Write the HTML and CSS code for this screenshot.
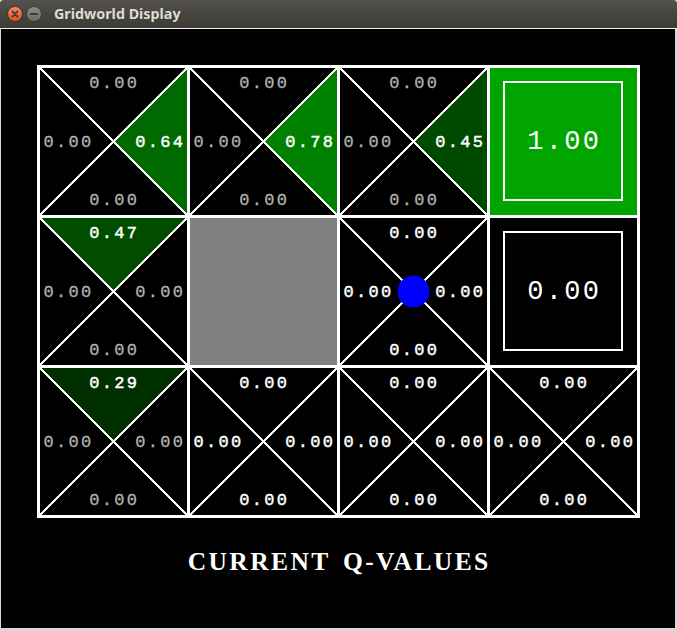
FILE: index.html
```html
<!DOCTYPE html>
<html>
<head>
<meta charset="utf-8">
<title>Gridworld Display</title>
<link rel="stylesheet" href="styles.css">
</head>
<body>
<div class="window">
  <div class="titlebar">
    <span class="btn">
      <svg width="16" height="16" viewBox="0 0 16 16">
        <defs>
          <linearGradient id="gClose" x1="0" y1="0" x2="0" y2="1">
            <stop offset="0" stop-color="#f58c64"/>
            <stop offset="1" stop-color="#df4a1c"/>
          </linearGradient>
          <linearGradient id="gMin" x1="0" y1="0" x2="0" y2="1">
            <stop offset="0" stop-color="#8c8b86"/>
            <stop offset="1" stop-color="#6a6964"/>
          </linearGradient>
        </defs>
        <circle cx="8" cy="8" r="7.5" fill="url(#gClose)" stroke="#3a2a22" stroke-width="0.8"/>
        <path d="M5.4 5.4 L10.6 10.6 M10.6 5.4 L5.4 10.6" stroke="#3c3b37" stroke-width="1.8" stroke-linecap="round"/>
      </svg>
    </span>
    <span class="btn">
      <svg width="16" height="16" viewBox="0 0 16 16">
        <circle cx="8" cy="8" r="7.5" fill="url(#gMin)" stroke="#33322e" stroke-width="0.8"/>
        <path d="M4.8 8 L11.2 8" stroke="#3c3b37" stroke-width="1.8" stroke-linecap="round"/>
      </svg>
    </span>
    <span class="title">Gridworld Display</span>
  </div>
  <div class="client">
    <div class="canvas">
      <div class="board">

        <!-- row 0 -->
        <div class="cell">
          <svg class="art" width="150" height="150" viewBox="-0.5 -0.5 150 150">
            <polygon points="75,75 150,0 150,150" fill="#006a00"/>
            <rect class="edge" x="0" y="0" width="150" height="150"/>
            <line class="diag" x1="0" y1="0" x2="150" y2="150"/>
            <line class="diag" x1="150" y1="0" x2="0" y2="150"/>
          </svg>
          <div class="vals">
            <span class="v top muted">0.00</span>
            <div class="mid"><span class="v muted">0.00</span><span class="v">0.64</span></div>
            <span class="v bottom muted">0.00</span>
          </div>
        </div>

        <div class="cell">
          <svg class="art" width="150" height="150" viewBox="-0.5 -0.5 150 150">
            <polygon points="75,75 150,0 150,150" fill="#008100"/>
            <rect class="edge" x="0" y="0" width="150" height="150"/>
            <line class="diag" x1="0" y1="0" x2="150" y2="150"/>
            <line class="diag" x1="150" y1="0" x2="0" y2="150"/>
          </svg>
          <div class="vals">
            <span class="v top muted">0.00</span>
            <div class="mid"><span class="v muted">0.00</span><span class="v">0.78</span></div>
            <span class="v bottom muted">0.00</span>
          </div>
        </div>

        <div class="cell">
          <svg class="art" width="150" height="150" viewBox="-0.5 -0.5 150 150">
            <polygon points="75,75 150,0 150,150" fill="#004a00"/>
            <rect class="edge" x="0" y="0" width="150" height="150"/>
            <line class="diag" x1="0" y1="0" x2="150" y2="150"/>
            <line class="diag" x1="150" y1="0" x2="0" y2="150"/>
          </svg>
          <div class="vals">
            <span class="v top muted">0.00</span>
            <div class="mid"><span class="v muted">0.00</span><span class="v">0.45</span></div>
            <span class="v bottom muted">0.00</span>
          </div>
        </div>

        <div class="cell">
          <svg class="art" width="150" height="150" viewBox="-0.5 -0.5 150 150">
            <rect x="0" y="0" width="150" height="150" fill="#00a500"/>
            <rect class="edge" x="0" y="0" width="150" height="150"/>
            <rect class="inner" x="15.5" y="15.5" width="118" height="118"/>
          </svg>
          <div class="exit-val">1.00</div>
        </div>

        <!-- row 1 -->
        <div class="cell">
          <svg class="art" width="150" height="150" viewBox="-0.5 -0.5 150 150">
            <polygon points="75,75 0,0 150,0" fill="#004d00"/>
            <rect class="edge" x="0" y="0" width="150" height="150"/>
            <line class="diag" x1="0" y1="0" x2="150" y2="150"/>
            <line class="diag" x1="150" y1="0" x2="0" y2="150"/>
          </svg>
          <div class="vals">
            <span class="v top">0.47</span>
            <div class="mid"><span class="v muted">0.00</span><span class="v muted">0.00</span></div>
            <span class="v bottom muted">0.00</span>
          </div>
        </div>

        <div class="cell">
          <svg class="art" width="150" height="150" viewBox="-0.5 -0.5 150 150">
            <rect x="0" y="0" width="150" height="150" fill="#808080"/>
            <rect class="edge" x="0" y="0" width="150" height="150"/>
          </svg>
        </div>

        <div class="cell">
          <svg class="art" width="150" height="150" viewBox="-0.5 -0.5 150 150">
            <rect class="edge" x="0" y="0" width="150" height="150"/>
            <line class="diag" x1="0" y1="0" x2="150" y2="150"/>
            <line class="diag" x1="150" y1="0" x2="0" y2="150"/>
            <circle class="agent" cx="75" cy="75" r="16"/>
          </svg>
          <div class="vals">
            <span class="v top">0.00</span>
            <div class="mid"><span class="v">0.00</span><span class="v">0.00</span></div>
            <span class="v bottom">0.00</span>
          </div>
        </div>

        <div class="cell">
          <svg class="art" width="150" height="150" viewBox="-0.5 -0.5 150 150">
            <rect class="edge" x="0" y="0" width="150" height="150"/>
            <rect class="inner" x="15.5" y="15.5" width="118" height="118"/>
          </svg>
          <div class="exit-val">0.00</div>
        </div>

        <!-- row 2 -->
        <div class="cell">
          <svg class="art" width="150" height="150" viewBox="-0.5 -0.5 150 150">
            <polygon points="75,75 0,0 150,0" fill="#003000"/>
            <rect class="edge" x="0" y="0" width="150" height="150"/>
            <line class="diag" x1="0" y1="0" x2="150" y2="150"/>
            <line class="diag" x1="150" y1="0" x2="0" y2="150"/>
          </svg>
          <div class="vals">
            <span class="v top">0.29</span>
            <div class="mid"><span class="v muted">0.00</span><span class="v muted">0.00</span></div>
            <span class="v bottom muted">0.00</span>
          </div>
        </div>

        <div class="cell">
          <svg class="art" width="150" height="150" viewBox="-0.5 -0.5 150 150">
            <rect class="edge" x="0" y="0" width="150" height="150"/>
            <line class="diag" x1="0" y1="0" x2="150" y2="150"/>
            <line class="diag" x1="150" y1="0" x2="0" y2="150"/>
          </svg>
          <div class="vals">
            <span class="v top">0.00</span>
            <div class="mid"><span class="v">0.00</span><span class="v">0.00</span></div>
            <span class="v bottom">0.00</span>
          </div>
        </div>

        <div class="cell">
          <svg class="art" width="150" height="150" viewBox="-0.5 -0.5 150 150">
            <rect class="edge" x="0" y="0" width="150" height="150"/>
            <line class="diag" x1="0" y1="0" x2="150" y2="150"/>
            <line class="diag" x1="150" y1="0" x2="0" y2="150"/>
          </svg>
          <div class="vals">
            <span class="v top">0.00</span>
            <div class="mid"><span class="v">0.00</span><span class="v">0.00</span></div>
            <span class="v bottom">0.00</span>
          </div>
        </div>

        <div class="cell">
          <svg class="art" width="150" height="150" viewBox="-0.5 -0.5 150 150">
            <rect class="edge" x="0" y="0" width="150" height="150"/>
            <line class="diag" x1="0" y1="0" x2="150" y2="150"/>
            <line class="diag" x1="150" y1="0" x2="0" y2="150"/>
          </svg>
          <div class="vals">
            <span class="v top">0.00</span>
            <div class="mid"><span class="v">0.00</span><span class="v">0.00</span></div>
            <span class="v bottom">0.00</span>
          </div>
        </div>

      </div>
      <div class="caption">CURRENT Q-VALUES</div>
    </div>
  </div>
</div>
</body>
</html>
```

FILE: styles.css
```css
html, body {
  margin: 0;
  padding: 0;
  background: #d6d6d6;
}

.window {
  width: 677px;
  height: 630px;
  overflow: hidden;
  background: #d8d8d8;
}

.titlebar {
  height: 28px;
  display: flex;
  align-items: center;
  padding-left: 7px;
  gap: 3px;
  background: linear-gradient(to bottom, #55534e 0%, #46453f 50%, #3c3b37 100%);
  border-radius: 4px 4px 0 0;
  box-sizing: border-box;
}

.btn {
  width: 16px;
  height: 16px;
  display: block;
}

.btn svg {
  display: block;
}

.title {
  margin-left: 9px;
  font-family: "Noto Sans", "DejaVu Sans", sans-serif;
  font-weight: bold;
  font-size: 14.3px;
  color: #dfdbd2;
  line-height: 28px;
}

.client {
  border-top: 1px solid #f2f2f2;
  padding-left: 1px;
}

.canvas {
  width: 674px;
  height: 599px;
  background: #000;
  overflow: hidden;
  display: flex;
  flex-direction: column;
}

.board {
  display: grid;
  grid-template-columns: repeat(4, 150px);
  grid-auto-rows: 150px;
  margin: 37px 0 0 37px;
}

.cell {
  position: relative;
  width: 150px;
  height: 150px;
}

.art {
  position: absolute;
  left: 0;
  top: 0;
  overflow: visible;
  shape-rendering: crispEdges;
}

.edge {
  fill: none;
  stroke: #fff;
  stroke-width: 3;
}

.diag {
  stroke: #fff;
  stroke-width: 2;
}

.inner {
  fill: none;
  stroke: #fff;
  stroke-width: 2;
}

.agent {
  fill: #0000ff;
  shape-rendering: geometricPrecision;
}

.vals {
  position: relative;
  height: 150px;
  box-sizing: border-box;
  padding-top: 8.5px;
  display: grid;
  grid-template-rows: 17px 42.8px 17px 40.3px 17px;
}

.v {
  font-family: "Liberation Mono", "DejaVu Sans Mono", monospace;
  font-weight: normal;
  font-size: 17px;
  line-height: 17px;
  letter-spacing: 2.3px;
  color: #ffffff;
  -webkit-text-stroke: 0.45px #ffffff;
  white-space: nowrap;
}

.v.muted {
  color: #b2b2b2;
  -webkit-text-stroke: 0.3px #b2b2b2;
}

.top {
  grid-row: 1;
  justify-self: center;
  padding-left: 2.3px;
}

.mid {
  grid-row: 3;
  display: flex;
  justify-content: space-between;
  padding: 0 2.8px 0 5.6px;
}

.bottom {
  grid-row: 5;
  justify-self: center;
  padding-left: 2.3px;
}

.exit-val {
  position: relative;
  height: 150px;
  box-sizing: border-box;
  padding: 3.6px 0 0 2.3px;
  display: flex;
  align-items: center;
  justify-content: center;
  font-family: "Liberation Mono", "DejaVu Sans Mono", monospace;
  font-size: 27px;
  line-height: 27px;
  letter-spacing: 2.3px;
  color: #fff;
}

.caption {
  margin-top: 33px;
  padding-left: 2.4px;
  text-align: center;
  font-family: "Liberation Serif", "DejaVu Serif", serif;
  font-weight: bold;
  font-size: 25.5px;
  line-height: 26px;
  letter-spacing: 2.4px;
  word-spacing: 4px;
  color: #fff;
}
```
